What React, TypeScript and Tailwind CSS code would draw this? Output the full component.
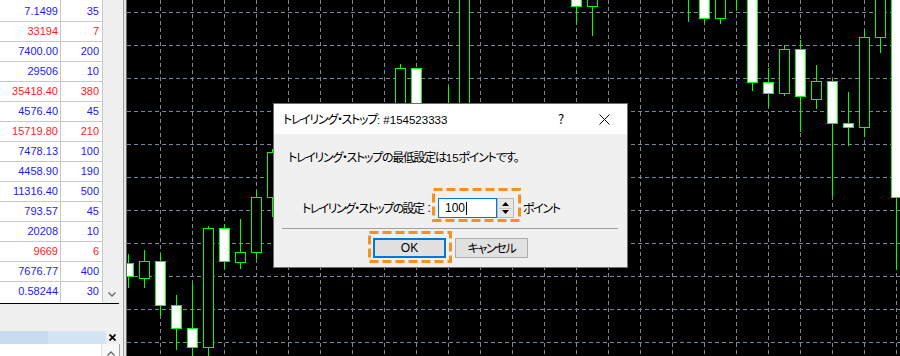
import React from 'react'

type Row = [string, string, 'b' | 'r']

const rows: Row[] = [
  ['7.1499', '35', 'b'],
  ['33194', '7', 'r'],
  ['7400.00', '200', 'b'],
  ['29506', '10', 'b'],
  ['35418.40', '380', 'r'],
  ['4576.40', '45', 'b'],
  ['15719.80', '210', 'r'],
  ['7478.13', '100', 'b'],
  ['4458.90', '190', 'b'],
  ['11316.40', '500', 'b'],
  ['793.57', '45', 'b'],
  ['20208', '10', 'b'],
  ['9669', '6', 'r'],
  ['7676.77', '400', 'b'],
  ['0.58244', '30', 'b'],
]

// c = centre x, bt/bb = body top/bottom, wt/wb = wick top/bottom, fill white or black
type Candle = { c: number; bt?: number; bb?: number; wt: number; wb: number; w?: boolean }

const candles: Candle[] = [
  { c: 128, bt: 263, bb: 276, wt: 254, wb: 288, w: true },
  { c: 144, bt: 261, bb: 278, wt: 250, wb: 288 },
  { c: 160, bt: 261, bb: 305, wt: 254, wb: 316, w: true },
  { c: 176, bt: 305, bb: 328, wt: 295, wb: 350, w: true },
  { c: 192, bt: 328, bb: 347, wt: 284, wb: 360, w: true },
  { c: 208, bt: 228, bb: 347, wt: 226, wb: 360 },
  { c: 224, bt: 228, bb: 261, wt: 224, wb: 269, w: true },
  { c: 240, bt: 252, bb: 262, wt: 219, wb: 269 },
  { c: 256, bt: 197, bb: 252, wt: 191, wb: 259 },
  { c: 272, bt: 152, bb: 197, wt: 149, wb: 217 },
  { c: 400, bt: 68, bb: 190, wt: 64, wb: 200 },
  { c: 416, bt: 68, bb: 160, wt: 68, wb: 170, w: true },
  { c: 448, bt: 130, bb: 200, wt: 87, wb: 210 },
  { c: 464, bt: -10, bb: 200, wt: -10, wb: 210 },
  { c: 576, bt: -10, bb: 6, wt: -10, wb: 23, w: true },
  { c: 592, bt: -10, bb: 6, wt: -10, wb: 36 },
  { c: 688, wt: -5, wb: 22 },
  { c: 704, bt: -10, bb: 18, wt: -10, wb: 23, w: true },
  { c: 720, bt: -10, bb: 18, wt: -10, wb: 24 },
  { c: 736, wt: -5, wb: 10 },
  { c: 752, bt: -10, bb: 82, wt: -10, wb: 91, w: true },
  { c: 768, bt: 82, bb: 93, wt: 68, wb: 107, w: true },
  { c: 784, bt: 49, bb: 93, wt: 45, wb: 96 },
  { c: 800, bt: 49, bb: 96, wt: 40, wb: 132, w: true },
  { c: 816, bt: 81, bb: 99, wt: 65, wb: 109 },
  { c: 832, bt: 81, bb: 123, wt: 79, wb: 197, w: true },
  { c: 848, bt: 123, bb: 127, wt: 92, wb: 146, w: true },
  { c: 864, bt: 37, bb: 127, wt: 30, wb: 137 },
  { c: 880, bt: -10, bb: 37, wt: -10, wb: 53 },
  { c: 896, bt: -10, bb: 197, wt: -10, wb: 270, w: true },
]

function Chevron({ up }: { up?: boolean }) {
  return (
    <svg width="8" height="5" viewBox="0 0 8 5">
      <polyline
        points={up ? '0.5,4.5 4,1 7.5,4.5' : '0.5,0.5 4,4 7.5,0.5'}
        fill="none"
        stroke="#6a6a6a"
        strokeWidth="1.4"
      />
    </svg>
  )
}

function LeftPanel() {
  return (
    <div className="flex w-[120px] shrink-0 flex-col bg-[#f0f0f0] text-[11px]">
      <div className="flex h-[303px]">
        <div className="w-[103px] bg-white">
          <div className="flex h-[2px]">
            <div className="w-[61px] border-r border-[#c8c8c8]" />
            <div className="w-[42px] border-r border-[#c8c8c8]" />
          </div>
          {rows.map(([a, b, c], i) => (
            <div
              key={i}
              className={`flex h-[20px] ${i < rows.length - 1 ? 'border-b border-[#c8c8c8]' : ''} ${
                c === 'r' ? 'text-[#ff1a1a]' : 'text-[#1a1aff]'
              }`}
            >
              <div className="w-[61px] border-r border-[#c8c8c8] pr-[2px] text-right leading-[19px]">{a}</div>
              <div className="w-[42px] border-r border-[#c8c8c8] pr-[3px] text-right leading-[19px]">{b}</div>
            </div>
          ))}
        </div>
        <div className="flex w-[17px] flex-col justify-end">
          <div className="flex h-[17px] items-center justify-center">
            <Chevron />
          </div>
        </div>
      </div>
      <div className="h-px w-[119px] bg-black" />
      <div className="h-[27px]" />
      <div className="flex h-[13px]">
        <div className="w-[48px] bg-[#c9dbef]" />
        <div className="w-[58px] bg-[#d5e4f4]" />
        <div className="flex w-[13px] items-center justify-center">
          <svg width="7" height="7" viewBox="0 0 7 7">
            <path d="M0.5 0.5L6.5 6.5M6.5 0.5L0.5 6.5" stroke="#000" strokeWidth="1.8" />
          </svg>
        </div>
      </div>
      <div className="flex flex-1">
        <div className="w-[102px] border-r border-[#e0e0e0] bg-white" />
        <div className="flex w-[17px] items-start justify-center bg-[#f7f7f7] pt-[7px]">
          <Chevron up />
        </div>
        <div className="w-px bg-[#a0a0a0]" />
      </div>
    </div>
  )
}

function Chart() {
  const vx: number[] = []
  for (let x = 160; x <= 896; x += 32) vx.push(x)
  const hy: number[] = []
  for (let y = 12; y <= 342; y += 33) hy.push(y)
  return (
    <svg width="773" height="356" viewBox="127 0 773 356" className="block shrink-0">
      <rect x="127" y="0" width="773" height="356" fill="#000" />
      {vx.map((x) => (
        <line key={'v' + x} x1={x + 0.5} y1="0" x2={x + 0.5} y2="356" stroke="#778899" strokeDasharray="4 3" />
      ))}
      {hy.map((y) => (
        <line key={'h' + y} x1="127" y1={y + 0.5} x2="900" y2={y + 0.5} stroke="#778899" strokeDasharray="4 3" />
      ))}
      {candles.map((k) => (
        <g key={k.c}>
          <line x1={k.c + 0.5} y1={k.wt} x2={k.c + 0.5} y2={k.wb} stroke="#00ff00" />
          {k.bt !== undefined && k.bb !== undefined && (
            <rect
              x={k.c - 4.5}
              y={k.bt + 0.5}
              width="10"
              height={k.bb - k.bt}
              fill={k.w ? '#fff' : '#000'}
              stroke="#00ff00"
            />
          )}
        </g>
      ))}
    </svg>
  )
}

function Dashed({ w, h }: { w: number; h: number }) {
  return (
    <svg width={w} height={h} viewBox={`0 0 ${w} ${h}`}>
      <rect x="1.5" y="1.5" width={w - 3} height={h - 3} fill="none" stroke="#f7901e" strokeWidth="3" strokeDasharray="9 4" />
    </svg>
  )
}

function Latin({ children }: { children: React.ReactNode }) {
  return <span className="font-['Liberation_Sans',sans-serif] text-[11.5px] tracking-normal">{children}</span>
}

function Dialog() {
  return (
    <div className="absolute left-[273px] top-[103px] flex h-[165px] w-[355px] flex-col border border-[#6e6e6e] bg-[#f0f0f0] font-['Noto_Sans_CJK_JP',sans-serif] text-[12px] text-black [font-feature-settings:'palt']">
      <div className="flex h-[30px] shrink-0 items-center bg-white pl-[9px]">
        <span className="whitespace-nowrap leading-[16px] tracking-[-1.3px]">
          トレイリング・ストップ<Latin>: #154523333</Latin>
        </span>
        <div className="flex-1" />
        <div className="flex h-[30px] w-[46px] items-center justify-center pl-[6px] text-[13px]">?</div>
        <div className="flex h-[30px] w-[46px] items-center justify-center">
          <svg width="11" height="11" viewBox="0 0 11 11">
            <path d="M0.5 0.5L10.5 10.5M10.5 0.5L0.5 10.5" stroke="#000" strokeWidth="1" />
          </svg>
        </div>
      </div>
      <div className="flex flex-1 flex-col">
        <p className="whitespace-nowrap pl-[14px] pt-[15px] leading-[16px] tracking-[-1.3px]">
          トレイリング・ストップの最低設定は<Latin>15</Latin>ポイントです。
        </p>
        <div className="mt-[32px] flex h-[20px] items-center pl-[28px]">
          <span className="flex w-[136px] whitespace-nowrap leading-[16px] tracking-[-1.6px]">
            トレイリング・ストップの設定
            <span className="ml-[4px] font-['Liberation_Sans',sans-serif]">:</span>
          </span>
          <div className="flex h-[20px] w-[76px]">
            <div className="flex w-[59px] items-center border border-[#0078d7] bg-white pl-[6px] font-['Liberation_Sans',sans-serif] text-[12px]">
              100
              <span className="ml-px h-[13px] w-px bg-black" />
            </div>
            <div className="flex w-[17px] flex-col border border-[#b9b9b9] bg-[#e6e6e6] p-px">
              <div className="flex flex-1 items-center justify-center border-b border-[#c8c8c8]">
                <svg width="7" height="4" viewBox="0 0 7 4">
                  <path d="M3.5 0L7 4H0Z" fill="#000" />
                </svg>
              </div>
              <div className="flex flex-1 items-center justify-center">
                <svg width="7" height="4" viewBox="0 0 7 4">
                  <path d="M0 0H7L3.5 4Z" fill="#000" />
                </svg>
              </div>
            </div>
          </div>
          <span className="ml-[9px] whitespace-nowrap leading-[16px] tracking-[-1.3px]">ポイント</span>
        </div>
        <div className="ml-[8px] mt-[10px] h-px w-[336px] bg-[#a0a0a0]" />
        <div className="mt-[9px] flex gap-[9px] pl-[99px]">
          <div className="flex h-[20px] w-[73px] items-center justify-center border-2 border-[#0078d7] bg-[#e1e1e1] font-['Liberation_Sans',sans-serif]">
            OK
          </div>
          <div className="flex h-[20px] w-[73px] items-center justify-center border border-[#adadad] bg-[#e1e1e1] tracking-[-1.3px]">
            キャンセル
          </div>
        </div>
      </div>
      <div className="absolute left-[158px] top-[84px]">
        <Dashed w={89} h={34} />
      </div>
      <div className="absolute left-[94px] top-[127px]">
        <Dashed w={84} h={32} />
      </div>
    </div>
  )
}

export default function App() {
  return (
    <div className="relative flex h-[356px] w-[900px] overflow-hidden bg-black font-['Liberation_Sans',sans-serif]">
      <LeftPanel />
      <div className="flex w-[7px] shrink-0">
        <div className="w-[3px] bg-[#f0f0f0]" />
        <div className="w-px bg-[#a0a0a0]" />
        <div className="w-[2px] bg-[#e3e3e3]" />
        <div className="w-px bg-[#696969]" />
      </div>
      <Chart />
      <Dialog />
    </div>
  )
}
